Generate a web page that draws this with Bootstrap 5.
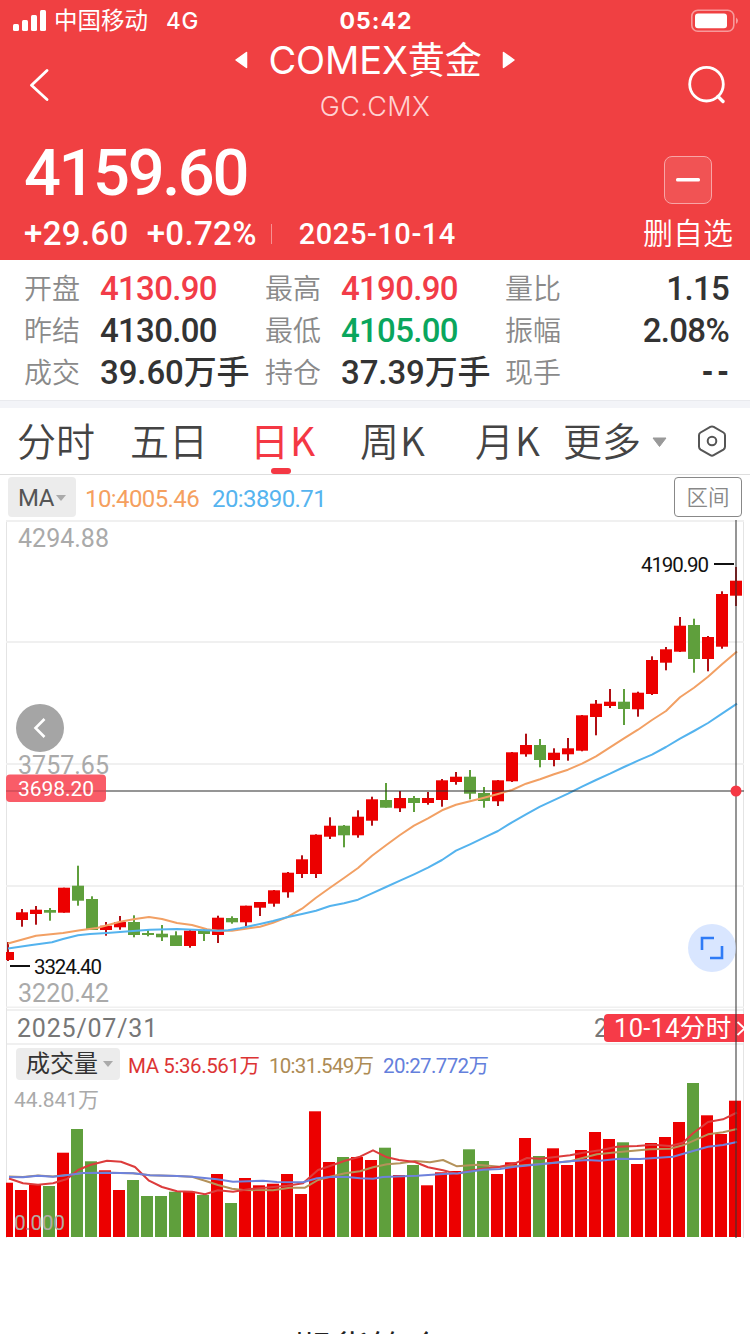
<!DOCTYPE html>
<html lang="zh-CN">
<head>
<meta charset="utf-8">
<meta name="viewport" content="width=device-width, initial-scale=1">
<title>COMEX黄金</title>
<link href="https://cdn.jsdelivr.net/npm/bootstrap@5.3.0/dist/css/bootstrap.min.css" rel="stylesheet">
<style>
body{width:750px;height:1334px;overflow:hidden;background:#fff;font-family:Roboto,"Noto Sans CJK SC",sans-serif;color:#333;white-space:nowrap}
svg{display:block;flex-shrink:0}
.quote-head{height:260px;background:#f04042;color:#fff}
.status-row{height:40px;display:grid;grid-template-columns:1fr auto 1fr;padding:0 11px 0 13px;font-family:Inter,"Noto Sans CJK SC",sans-serif;font-size:22.5px;line-height:42px}
.carrier{font-size:23.5px;margin-left:8px}
.net-type{margin-left:18px;letter-spacing:.8px;font-weight:500}
.clock{font-weight:700;font-size:23px;letter-spacing:1px}
.title-row{height:92px;padding:0 24px 0 30px;font-family:Inter,"Noto Sans CJK SC",sans-serif}
.title-mid{margin-left:14px}
.title-main{font-size:37px;line-height:40px;height:40px}
.title-text{letter-spacing:-.1px}
.title-latin{font-size:38px}
.title-sub{font-size:27px;font-weight:300;line-height:32px;margin-top:11px;color:#ffd2d2;letter-spacing:.4px}
.price{font-size:65px;font-weight:500;line-height:74px;height:77px;letter-spacing:-2.4px}
.chg{font-size:33px;font-weight:500;line-height:41px;letter-spacing:.35px}
.date-now{font-size:29px;font-weight:500;line-height:40px;letter-spacing:.55px}
.head-sep{width:1px;height:20px;background:#f79091}
.minus-box{width:48px;height:48px;border:1px solid #f8a5a6;border-radius:8px;background:#f15354}
.del-label{font-size:30px;font-weight:350;line-height:40px}
.stats{height:141px;padding:7px 21px 0 24px;display:grid;grid-template-columns:241px 240px 1fr;grid-auto-rows:42px;border-bottom:1px solid #e9eaee}
.stats .k{width:76px;font-size:28px;font-weight:350;color:#8a8a8a;line-height:45px}
.stats .v{font-size:33px;font-weight:500;line-height:44px;letter-spacing:-.7px}
.stats .v-unit{letter-spacing:-.1px}
.stats .v-none{font-family:"Liberation Sans",sans-serif;font-weight:700;letter-spacing:4.500px;margin-right:-4px;line-height:40px}
.up{color:#f23c48}.down{color:#0aa65d}
.gap-band{height:7px;background:#f3f4f8}
.tabs{height:67px;border-bottom:1px solid #dedede;padding-left:17px;font-size:39px;line-height:62px;color:#444;font-family:"Noto Sans CJK SC",sans-serif;font-weight:350}
.tabs .t2{width:113px}.tabs .t3{width:120px}.tabs .t4{width:110px}.tabs .t5{width:115px}.tabs .t6{width:88px}
.tab-k{letter-spacing:1px}
.tab-on{color:#f43844;font-weight:400}
.tab-on::after{content:"";position:absolute;left:21px;bottom:0;width:20px;height:6px;border-radius:3px;background:#f43844}
.ma-row{height:45px;padding:2px 8px 0 8px;font-size:24px}
.chip{background:#ececec;border-radius:4px;color:#555}
.ma-chip{width:68px;height:40px;padding-left:10px;padding-top:2px;letter-spacing:-.4px}
.ma-val{letter-spacing:-.6px;line-height:44px}
.range-btn{width:68px;height:40px;border:1px solid #888;border-radius:4px;color:#888;font-size:21.5px;font-weight:350;line-height:40px}
.charts{width:738px;margin-left:6px;height:718px;border-left:1px solid #e4e4e4;border-right:1px solid #e4e4e4}
.charts svg.pane{margin-left:-1px}
.k-pane{height:489px}
.date-pane{height:36px;border-top:2px solid #f0f0f0;border-bottom:2px solid #f0f0f0;padding-left:10px;font-size:25px;line-height:36px;color:#777;letter-spacing:.8px}
.vol-head{height:38px;padding:3px 0 0 9px;font-size:20px}
.vol-chip{width:104px;height:32px;font-size:24px;line-height:32px;padding-left:10px;color:#333}
.vol-pane{height:155px}
.jump{position:absolute;left:597px;top:494px;width:140px;height:28px;overflow:hidden;border-radius:4px 0 0 4px;background:#f63b48;color:#fff;font-size:25.500px;line-height:29px;padding-left:10px;letter-spacing:.3px}
.cross-layer{position:absolute;left:0;top:0;margin-left:-1px}
.foot-note{margin:88px 12px 0 0;font-size:38px;line-height:48px;text-align:center;font-weight:350;color:#222}
</style>
</head>
<body>
<header class="quote-head">
  <div class="status-row">
    <div class="d-flex align-items-center">
      <svg width="33" height="22" viewBox="0 0 33 22" fill="#fff"><rect x="0" y="14" width="6" height="7" rx="1.5"/><rect x="9" y="10" width="6" height="11" rx="1.5"/><rect x="18" y="5" width="6" height="16" rx="1.5"/><rect x="27" y="0" width="6" height="21" rx="1.5"/></svg>
      <span class="carrier">中国移动</span><span class="net-type">4G</span>
    </div>
    <div class="clock">05:42</div>
    <div class="d-flex justify-content-end align-items-center">
      <svg width="48" height="24" viewBox="0 0 48 24"><rect x=".8" y="1.2" width="42" height="21" rx="6" fill="none" stroke="#f79a9b" stroke-width="1.6"/><rect x="4" y="4.6" width="32" height="14.6" rx="3" fill="#fff"/><path d="M45 8.5q4 3.2 0 6.5z" fill="#f79a9b"/></svg>
    </div>
  </div>
  <div class="title-row d-flex justify-content-between">
    <svg class="mt-4" width="20" height="42" viewBox="0 0 20 42"><path d="M17 6.500L1.500 21.200L17 35.500" fill="none" stroke="#fff" stroke-width="2.800" stroke-linecap="round" stroke-linejoin="round"/></svg>
    <div class="title-mid text-center">
      <div class="title-main d-flex align-items-center justify-content-center">
        <svg width="14" height="20" viewBox="0 0 14 20"><path d="M12.500 2.500v15L2 10z" fill="#fff" stroke="#fff" stroke-width="1.500" stroke-linejoin="round"/></svg>
        <span class="title-text mx-3 px-1"><span class="title-latin">COMEX</span>黄金</span>
        <svg width="14" height="20" viewBox="0 0 14 20"><path d="M1.500 2.500v15L12 10z" fill="#fff" stroke="#fff" stroke-width="1.500" stroke-linejoin="round"/></svg>
      </div>
      <div class="title-sub">GC.CMX</div>
    </div>
    <svg class="mt-4" width="40" height="42" viewBox="0 0 40 42"><circle cx="20.500" cy="20.200" r="16.800" fill="none" stroke="#fff" stroke-width="2.800"/><path d="M32 32.500L37 37.500" stroke="#fff" stroke-width="3.400" stroke-linecap="round"/></svg>
  </div>
  <div class="d-flex justify-content-between">
    <div style="padding-left:24px">
      <div class="price mt-1">4159.60</div>
      <div class="d-flex align-items-center">
        <span class="chg">+29.60</span><span class="chg" style="margin-left:18px">+0.72%</span>
        <span class="head-sep" style="margin-left:14px;margin-right:27px"></span>
        <span class="date-now">2025-10-14</span>
      </div>
    </div>
    <div class="d-flex flex-column align-items-center" style="padding:24px 17px 0 0">
      <div class="minus-box d-flex align-items-center justify-content-center"><svg width="24" height="4"><rect width="24" height="3.400" rx="1.500" fill="#fff"/></svg></div>
      <div class="del-label" style="margin-top:10px">删自选</div>
    </div>
  </div>
</header>

<section class="stats">
  <div class="d-flex"><span class="k">开盘</span><span class="v up">4130.90</span></div>
  <div class="d-flex"><span class="k">最高</span><span class="v up">4190.90</span></div>
  <div class="d-flex justify-content-between"><span class="k">量比</span><span class="v">1.15</span></div>
  <div class="d-flex"><span class="k">昨结</span><span class="v">4130.00</span></div>
  <div class="d-flex"><span class="k">最低</span><span class="v down">4105.00</span></div>
  <div class="d-flex justify-content-between"><span class="k">振幅</span><span class="v">2.08%</span></div>
  <div class="d-flex"><span class="k">成交</span><span class="v v-unit">39.60万手</span></div>
  <div class="d-flex"><span class="k">持仓</span><span class="v v-unit">37.39万手</span></div>
  <div class="d-flex justify-content-between"><span class="k">现手</span><span class="v v-none">--</span></div>
</section>
<div class="gap-band"></div>

<nav class="tabs d-flex">
  <span class="t2">分时</span><span class="t3">五日</span><span class="t4 tab-k tab-on position-relative">日K</span><span class="t5 tab-k">周K</span><span class="t6 tab-k">月K</span><span>更多</span>
  <svg width="15" height="66" style="margin-left:11px"><path d="M1 30h13l-6.500 8.500z" fill="#999" stroke="#999" stroke-linejoin="round"/></svg>
  <svg width="34" height="66" viewBox="0 0 34 66" style="margin-left:28px" fill="none" stroke="#555" stroke-width="2"><path d="M15.300 18.900q1.700-1 3.400 0l9.700 5.600q1.600 1 1.600 2.800v11.500q0 1.800-1.600 2.800l-9.700 5.600q-1.700 1-3.400 0l-9.700-5.600q-1.600-1-1.600-2.800v-11.500q0-1.800 1.600-2.800z"/><circle cx="17" cy="33" r="4.300"/></svg>
</nav>

<div class="ma-row d-flex">
  <div class="chip ma-chip d-flex align-items-center">MA<svg width="10" height="7" style="margin-left:2px"><path d="M0 0h10L5 6z" fill="#aaa"/></svg></div>
  <span class="ma-val" style="margin-left:9px;color:#f5a05f">10:4005.46</span>
  <span class="ma-val" style="margin-left:13px;color:#56b4ef">20:3890.71</span>
  <div class="range-btn text-center ms-auto">区间</div>
</div>

<main class="charts position-relative">
  <div class="k-pane"><svg id="kline" class="pane" width="738" height="488" viewBox="6 520 738 488"></svg></div>
  <div class="date-pane d-flex justify-content-between"><span>2025/07/31</span><span style="margin-right:8px">2025/10/14</span></div>
  <div class="vol-head d-flex">
    <div class="chip vol-chip d-flex align-items-center">成交量<svg width="10" height="7" style="margin-left:5px"><path d="M0 0h10L5 6z" fill="#aaa"/></svg></div>
    <svg width="380" height="32" font-size="20.500"><text x="8" y="24.500" textLength="132" fill="#dc3434">MA 5:36.561万</text><text x="149" y="24.500" textLength="105" fill="#ad8b54">10:31.549万</text><text x="263" y="24.500" textLength="106" fill="#6480dc">20:27.772万</text></svg>
  </div>
  <div class="vol-pane"><svg id="volume" class="pane" width="738" height="155" viewBox="6 1083 738 155"></svg></div>
  <div class="jump">10-14分时<svg class="position-absolute" style="left:132px;top:6px" width="9" height="17"><path d="M1.500 2l7 6.500l-7 6.500" fill="none" stroke="#fff" stroke-width="1.800"/></svg></div>
  <svg id="cross" class="cross-layer" width="738" height="718" viewBox="6 520 738 718"></svg>
</main>
<div class="foot-note">期货简介</div>

<script>
// Each candle: colour, body top, body bottom, high, low
const candles = `R 952 960 942 961|R 912.3 920 909 926.7|R 909.7 914 906 924.7|G 910 912.7 908 920.7|R 887.7 912.7 887.7 912.7|G 885.7 900.7 865.7 905.7|G 899 930 896.3 930|R 925.7 930 922 935.7|R 922 927.3 916 929.7|G 922 935 915.3 937.3|G 933 935 929.3 936.3|G 933.7 937.3 925 941|G 935.3 946 931.3 946|R 930.7 946 930 947.7|G 930 934 929 941|R 917.7 935 915.7 943|G 918 922.3 916.3 923.7|R 905.7 922.3 905.7 926|R 902 907.7 902 916|R 890.3 903.7 890 906.7|R 872.7 892.3 872 897.7|R 859.3 874 855.3 878|R 834.7 874 834.3 878|R 825.7 836.7 817.3 839|G 825.7 835.3 825 847.3|R 816.7 835.3 810.3 837.7|R 799.3 820.7 796.7 825.7|G 800 807.7 783 807.7|R 798 808.3 791 812|G 798 803 796 812|R 798 803 792 804.7|R 780.3 800 779 806.7|R 776.7 782 772 784.7|G 776.7 793.7 770 799.3|G 793 801 787 807.7|R 780.3 801.3 780 806|R 752.3 781.3 752 782|R 745 754.3 733.7 756.7|G 745 760 739 767.3|R 752.7 760 748.3 766.3|R 748.3 754.3 738 760.7|R 715.3 750.7 715 751.3|R 703.7 717 700 735.3|R 701.7 706 689 708|G 701.7 709 689 725|R 692.7 709.3 691.7 716.7|R 660 694 656.3 695|R 649.3 662.7 647 670.3|R 625.7 651.7 617 652|G 625 659 618.7 672.7|R 637 659 636 671.3|R 594 646.7 591.3 648.7|R 580.7 595.7 567 606`.split('|').map(s => s.split(' '));
const volTops = [1182.7,1190,1185,1186,1152.7,1129,1161.3,1170.3,1190,1180,1196,1196,1191.7,1191.7,1195,1174,1203,1178,1185.3,1183.7,1174,1194,1111.3,1162,1157,1157,1160,1147.7,1175,1165,1185.3,1172.3,1171,1149.3,1161,1174,1162.3,1138,1156,1148.3,1165,1150,1132,1139,1142.3,1164,1143,1137,1122,1083,1115.3,1134,1100.7];
const volColors = 'RRRGRGGRRGGGGRGRGRRRRRRRGRRGRGRRRGGRRRGRRRRRGRRRRGRRR';
const RED = '#ec0000', GREEN = '#5f9f3c';
const line = (pts, c, w = 2) => `<polyline points="${pts}" fill="none" stroke="${c}" stroke-width="${w}" stroke-linejoin="round"/>`;
const label = (x, y, w, size, c, t) => `<text x="${x}" y="${y}" textLength="${w}" font-size="${size}" fill="${c}">${t}</text>`;

let k = '';
[521, 642, 764, 886, 1007.5].forEach(y => k += `<path d="M6 ${y}H744" stroke="#f0f0f0" stroke-width="2"/>`);
k += label(18, 547, 91, 25, '#aaa', '4294.88') + label(18, 774, 91, 25, '#aaa', '3757.65') + label(18, 1002, 91, 25, '#aaa', '3220.42');
candles.forEach(([c, t, b, h, l], i) => {
  const x = 8 + 14 * i;
  k += `<rect x="${x - 1}" y="${h}" width="2" height="${l - h}" fill="${c === 'R' ? '#b00f14' : GREEN}"/><rect x="${x - 6}" y="${t}" width="12" height="${b - t}" fill="${c === 'R' ? RED : GREEN}"/>`;
});
k += line('8,943.5 36,935.7 63,933 80,930.3 97,928 120,921.7 135,919 149,917 162,919 177,923 192,925 207,929.3 218,930.7 232,930.7 260,926.7 273,922.7 288,916.7 302,908.7 316,897.7 330,887.7 344,878 358,868 372,855.7 386,845.3 400,835 414,825.7 428,818.3 442,810.3 456,804.7 470,801.3 484,797.7 498,794 512,790 526,783.7 540,779.3 554,774.3 568,769.7 582,763.7 596,756.3 610,747.3 624,738.3 638,729.7 652,720 666,711 680,697.3 694,687.7 708,676.7 722,664.3 737,651.5', '#f2a064');
k += line('8,948.5 30,945.3 52,942.3 63,939 78,935.3 90,934 107,933 133,931 150,929.7 177,929 200,930 218,930.7 228,930.3 240,928.3 260,924 273,921 288,917 302,914 316,910.7 330,906 344,903.3 358,899.7 372,893.3 386,887 400,880.7 414,874.3 428,867.7 442,860 456,850.7 470,844.3 484,837.7 498,831 512,822.3 526,814.3 540,806.7 568,793.7 582,786.7 596,780 610,773.7 624,767 638,760.7 652,754.7 666,747 680,738.7 694,731 708,723 722,713.7 737,703.700', '#54b3ee');
k += '<path d="M10 966H30M714 564H734" stroke="#111" stroke-width="2"/>';
k += label(34, 974, 68, 20.5, '#111', '3324.40') + label(641, 572, 68, 20.5, '#111', '4190.90');
document.getElementById('kline').innerHTML = k;

let v = '';
volTops.forEach((t, i) => v += `<rect x="${1 + 14 * i}" y="${t}" width="12" height="${1237 - t}" fill="${volColors[i] === 'R' ? RED : GREEN}"/>`);
v += line('9,1176.5 23,1177 38,1175.5 53,1176.5 70,1174.7 83,1173 107,1172.7 133,1173.3 150,1175.3 177,1176 192,1176.7 205,1180.7 218,1185 232,1188.7 243,1190 273,1190.3 290,1187.7 305,1187.7 318,1180 330,1176.7 345,1173.3 360,1171.3 373,1167.3 387,1164.3 400,1163.3 415,1161 430,1162.3 443,1160 457,1166.3 477,1164.7 500,1166.7 515,1166 540,1164 570,1161.3 597,1154.3 617,1152.3 650,1149.3 670,1148.7 683,1145.3 708,1134.3 723,1132.3 737,1129', '#b4925a');
v += line('9,1178.5 23,1183.3 38,1184.7 53,1183.3 67,1179 78,1170 90,1165 107,1160.7 121,1161.7 135,1167 149,1180.7 162,1187 177,1191.3 192,1191.7 205,1194.3 218,1190.3 233,1191.7 250,1189 273,1187 287,1185.7 303,1183.3 318,1170 330,1166 345,1160.7 360,1156.7 373,1150.3 387,1157.3 399,1160 415,1162 428,1167.3 443,1170.3 457,1174 470,1170.7 483,1168.7 500,1166.7 515,1163.3 527,1158 540,1158.7 553,1157.3 570,1155.3 583,1152.7 600,1150.3 617,1146.7 637,1146 653,1144.7 670,1146 683,1142.7 693,1133.3 708,1122 723,1119.3 737,1112.5', '#dc3c3c');
v += line('9,1177 23,1177.3 38,1175.7 53,1176.7 70,1174.7 83,1173 107,1172.7 133,1173.3 150,1175.3 177,1176 192,1176.7 217,1179.3 233,1181.7 263,1180.7 277,1182 303,1182.3 317,1178.3 330,1177 347,1177 360,1178.3 373,1178.7 383,1177 417,1175.7 443,1174 458,1173.3 483,1169.7 500,1169 515,1166.7 540,1164.3 570,1161.3 587,1160 600,1160.7 620,1158.7 640,1159 673,1156.7 693,1151 708,1146.7 723,1145 737,1142', '#6e82dc');
v += label(14, 1106.5, 85, 21, '#aaa', '44.841万') + label(14, 1229.5, 51, 21, '#b4aca4', '0.000');
document.getElementById('volume').innerHTML = v;

// Crosshair, price marker and round chart controls
document.getElementById('cross').innerHTML =
  '<path d="M6 791H744M736 520V1238" stroke="#333" stroke-opacity=".52" stroke-width="2"/>' +
  '<circle cx="736" cy="791" r="5.500" fill="#f53844"/>' +
  '<rect x="6" y="774.500" width="100" height="27.500" rx="4" fill="#f95c68"/><path d="M6 791H106" stroke="#d9505c" stroke-width="2"/>' + label(18, 796, 76, 21, '#fff', '3698.20') +
  '<circle cx="40" cy="728" r="24" fill="#a5a5a5"/><path d="M44.500 719L35.500 728L44.500 737" fill="none" stroke="#fff" stroke-width="2.600"/>' +
  '<circle cx="712" cy="948" r="24" fill="#c9dcff" fill-opacity=".7"/><path d="M702 950V938H714M722 946V958H710" fill="none" stroke="#2f7bf6" stroke-width="2.600"/>';
</script>
<script src="https://cdn.jsdelivr.net/npm/bootstrap@5.3.0/dist/js/bootstrap.bundle.min.js"></script>
</body>
</html>
